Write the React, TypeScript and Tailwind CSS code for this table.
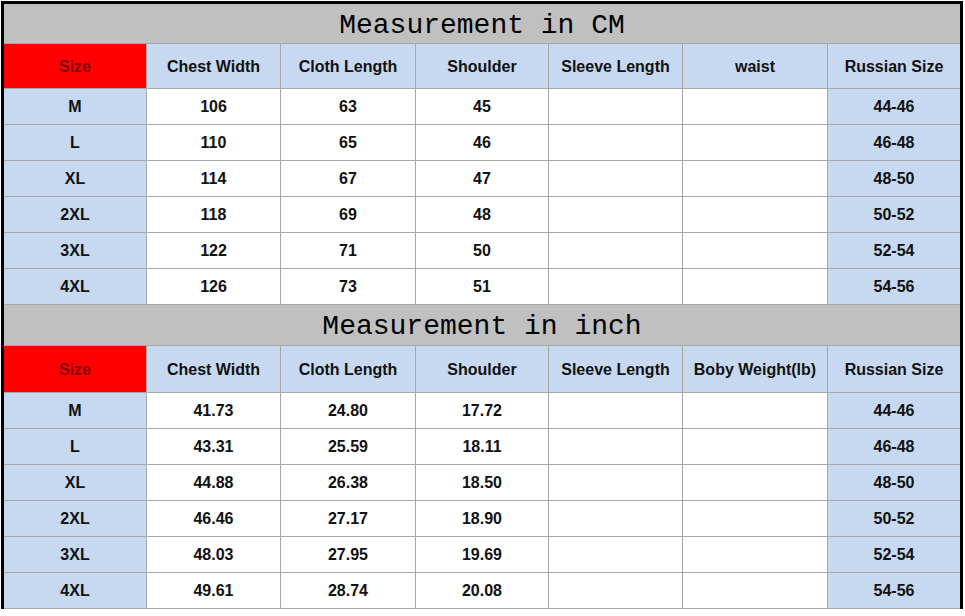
const COLS = "grid grid-cols-[143px_134px_135px_133px_134px_145px_132px]";

const cmRows = [
  ["M", "106", "63", "45", "", "", "44-46"],
  ["L", "110", "65", "46", "", "", "46-48"],
  ["XL", "114", "67", "47", "", "", "48-50"],
  ["2XL", "118", "69", "48", "", "", "50-52"],
  ["3XL", "122", "71", "50", "", "", "52-54"],
  ["4XL", "126", "73", "51", "", "", "54-56"],
];

const inchRows = [
  ["M", "41.73", "24.80", "17.72", "", "", "44-46"],
  ["L", "43.31", "25.59", "18.11", "", "", "46-48"],
  ["XL", "44.88", "26.38", "18.50", "", "", "48-50"],
  ["2XL", "46.46", "27.17", "18.90", "", "", "50-52"],
  ["3XL", "48.03", "27.95", "19.69", "", "", "52-54"],
  ["4XL", "49.61", "28.74", "20.08", "", "", "54-56"],
];

function Title({ text, h }: { text: string; h: string }) {
  return (
    <div
      className={`${h} flex items-center justify-center border-b border-[#a8a8a8] bg-[#c0c0c0] pt-1 font-['Liberation_Mono',monospace] text-[28px] font-normal leading-none text-black`}
    >
      {text}
    </div>
  );
}

function Header({ last, h }: { last: string; h: string }) {
  const labels = ["Chest Width", "Cloth Length", "Shoulder", "Sleeve Length", last, "Russian Size"];
  return (
    <div className={`${COLS} ${h}`}>
      <div className="flex items-center justify-center border-b border-r border-[#a8a8a8] bg-[#ff0000] pt-px text-[#800000]">
        Size
      </div>
      {labels.map((l, i) => (
        <div
          key={i}
          className={`flex items-center justify-center border-b border-[#a8a8a8] bg-[#c6d9f0] pt-px ${i < 5 ? "border-r" : ""}`}
        >
          {l}
        </div>
      ))}
    </div>
  );
}

function Rows({ rows }: { rows: string[][] }) {
  return (
    <>
      {rows.map((r) => (
        <div key={r[0]} className={`${COLS} h-9`}>
          {r.map((v, i) => (
            <div
              key={i}
              className={`flex items-center justify-center border-b border-[#a8a8a8] pt-px ${
                i === 0 || i === 6 ? "bg-[#c6d9f0]" : "bg-white"
              } ${i < 6 ? "border-r" : ""}`}
            >
              {v}
            </div>
          ))}
        </div>
      ))}
    </>
  );
}

export default function App() {
  return (
    <div className="min-h-[616px] w-[965px] bg-white pl-px pt-px">
      <div className="w-[962px] border-l-[3px] border-r-[3px] border-t-[3px] border-black font-['Liberation_Sans',Arial,sans-serif] text-[16px] font-bold text-[#111]">
        <Title text="Measurement in CM" h="h-10" />
        <Header last="waist" h="h-[45px]" />
        <Rows rows={cmRows} />
        <Title text="Measurement in inch" h="h-[41px]" />
        <Header last="Boby Weight(lb)" h="h-[47px]" />
        <Rows rows={inchRows} />
      </div>
    </div>
  );
}
